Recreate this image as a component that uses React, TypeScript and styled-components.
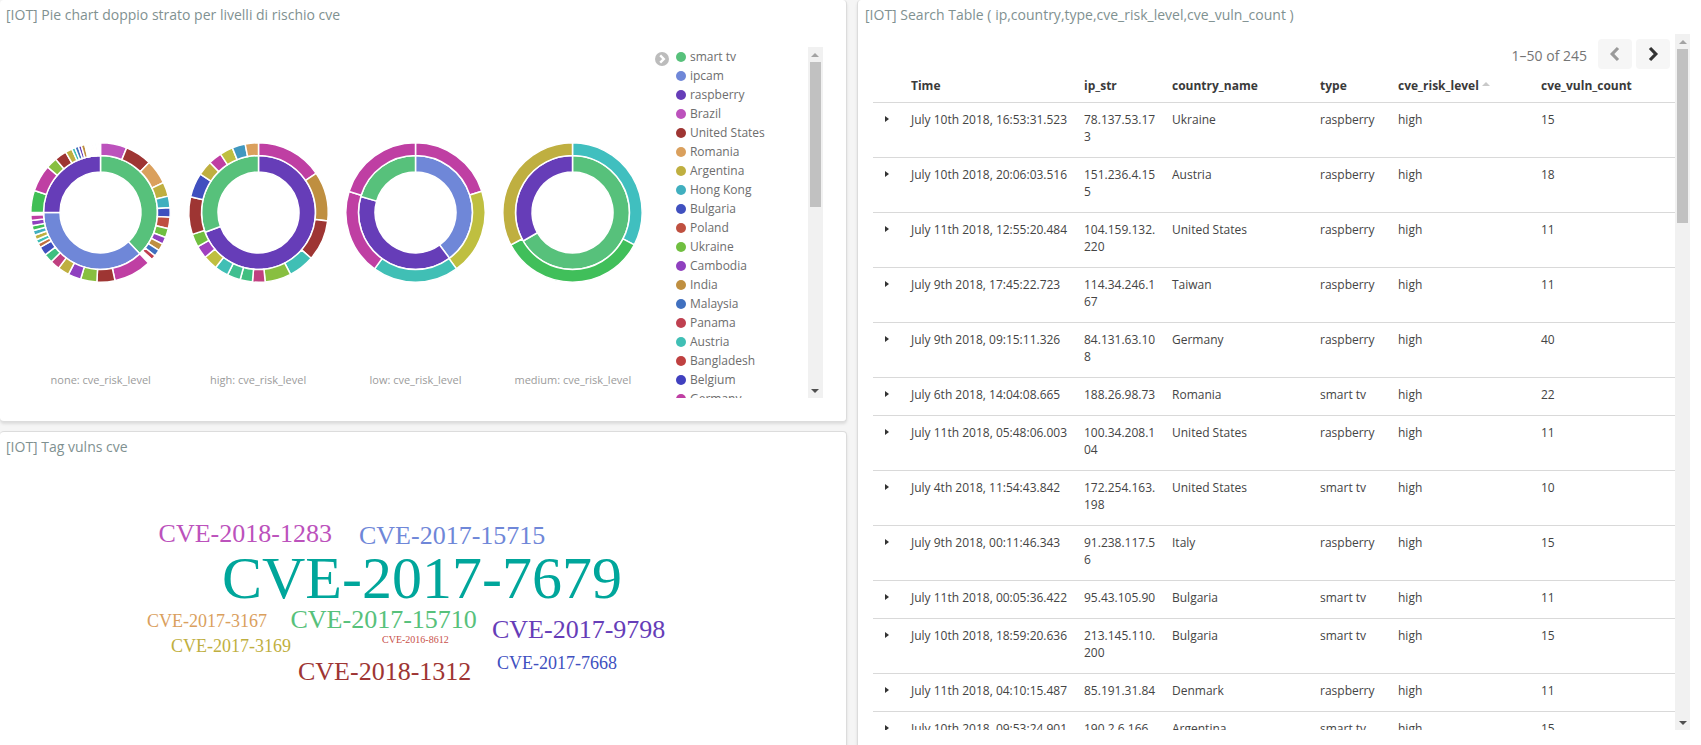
import styled, { createGlobalStyle } from "styled-components";

const GlobalStyle = createGlobalStyle`
  html, body {
    margin: 0;
    padding: 0;
    height: 745px;
    overflow: hidden;
    background: #f5f5f5;
    font-family: "Open Sans", "Noto Sans", sans-serif;
  }
`;

const Page = styled.div`
  display: grid;
  grid-template-columns: 847px 860px;
  grid-template-rows: 760px;
  column-gap: 10px;
  width: 1701px;
  height: 745px;
  overflow: hidden;
`;
const LeftColumn = styled.div`
  display: flex;
  flex-direction: column;
  gap: 9px;
`;
const Panel = styled.section<{ $height?: number; $flushTop?: boolean; $flushLeft?: boolean }>`
  box-sizing: border-box;
  flex: ${({ $height }) => ($height ? `0 0 ${$height}px` : "1")};
  min-height: 0;
  background: #fff;
  border: 1px solid #dcdcdc;
  border-top-width: ${({ $flushTop }) => ($flushTop ? 0 : "1px")};
  border-left-width: ${({ $flushLeft }) => ($flushLeft ? 0 : "1px")};
  border-radius: 4px;
  box-shadow: 0 2px 3px rgba(0, 0, 0, 0.1);
  overflow: hidden;
`;
const Title = styled.h2`
  margin: 0;
  height: 30px;
  padding-left: 6px;
  font-size: 14px;
  font-weight: 400;
  line-height: 30px;
  color: #7f9191;
  white-space: nowrap;
`;
const TableTitle = styled(Title)`
  padding-left: 7px;
  height: 34px;
`;

const PieBody = styled.div`
  display: flex;
  padding-left: 22px;
`;
const Charts = styled.div`
  display: flex;
  padding-top: 104px;
`;
const ChartColumn = styled.div`
  width: 157.4px;
  display: flex;
  flex-direction: column;
  align-items: center;
`;
const Donut = styled.svg`
  display: block;
  flex: none;
  width: 157px;
  height: 157px;
`;
const ChartLabel = styled.div`
  margin-top: 81px;
  font-size: 11px;
  line-height: 16px;
  color: #9b9b9b;
  white-space: nowrap;
`;
const LegendToggle = styled.svg`
  flex: none;
  width: 14px;
  height: 14px;
  margin: 22px 1px 0 3.4px;
`;
const LegendBox = styled.div`
  display: flex;
  margin-top: 17px;
  height: 351px;
`;
const LegendList = styled.ul`
  width: 138px;
  height: 351px;
  margin: 0;
  padding: 0 0 0 6px;
  box-sizing: border-box;
  list-style: none;
  overflow: hidden;
`;
const LegendItem = styled.li`
  display: flex;
  align-items: center;
  height: 19px;
  font-size: 12px;
  color: #6d6d6d;
  white-space: nowrap;
`;
const LegendDot = styled.span<{ $color: string }>`
  flex: none;
  width: 10px;
  height: 10px;
  margin-right: 4px;
  border-radius: 50%;
  background: ${({ $color }) => $color};
`;
const Track = styled.div`
  flex: none;
  width: 15px;
  display: flex;
  flex-direction: column;
  align-items: center;
  background: #f1f1f1;
`;
const ArrowBox = styled.div`
  flex: none;
  height: 15px;
  display: flex;
  align-items: center;
  justify-content: center;
`;
const ArrowUp = styled.span`
  width: 0;
  height: 0;
  border-left: 4px solid transparent;
  border-right: 4px solid transparent;
  border-bottom: 4px solid #a3a3a3;
`;
const ArrowDown = styled.span`
  width: 0;
  height: 0;
  border-left: 4px solid transparent;
  border-right: 4px solid transparent;
  border-top: 4px solid #505050;
`;
const Thumb = styled.div<{ $height: number }>`
  width: 11px;
  height: ${({ $height }) => $height}px;
  background: #c1c1c1;
`;
const TrackGap = styled.div`
  flex: 1;
`;

const Cloud = styled.svg`
  display: block;
  width: 846px;
  height: 283px;
  font-family: "Liberation Serif", "Times New Roman", serif;
`;

const TableScroll = styled.div`
  display: flex;
  height: 696px;
  padding-left: 15px;
`;
const TableArea = styled.div`
  width: 802px;
  flex: none;
  overflow: hidden;
`;
const Pager = styled.div`
  display: flex;
  align-items: center;
  justify-content: flex-end;
  height: 35px;
  padding: 0 5px 0 0;
  box-sizing: border-box;
  font-size: 14px;
  color: #757575;
`;
const PagerLabel = styled.span`
  margin-right: 7px;
  padding-top: 8px;
`;
const PagerButton = styled.button`
  width: 34px;
  height: 30px;
  margin: 5px 0 0 4px;
  padding: 0;
  display: flex;
  align-items: center;
  justify-content: center;
  background: #f6f6f6;
  border: 0;
  border-radius: 4px;
`;
const Table = styled.table`
  width: 802px;
  table-layout: fixed;
  border-collapse: collapse;
  font-size: 12px;
  line-height: 17px;
  color: #444;
`;
const Col = styled.col<{ $width: number }>`
  width: ${({ $width }) => $width}px;
`;
const Th = styled.th`
  height: 33px;
  padding: 0 8px;
  box-sizing: border-box;
  border-bottom: 1px solid #d9d9d9;
  text-align: left;
  font-weight: 700;
  color: #3a3a3a;
  white-space: nowrap;
`;
const SortMark = styled.span`
  display: inline-block;
  margin: 0 0 5px 3px;
  vertical-align: middle;
  border-left: 4px solid transparent;
  border-right: 4px solid transparent;
  border-bottom: 4px solid #c9c9c9;
`;
const Td = styled.td`
  padding: 8px 6px 12px 8px;
  border-bottom: 1px solid #d9d9d9;
  vertical-align: top;
  word-break: break-all;
`;
const ToggleCell = styled.td`
  padding: 13px 0 0 12px;
  border-bottom: 1px solid #d9d9d9;
  vertical-align: top;
`;
const Caret = styled.span`
  display: block;
  width: 0;
  height: 0;
  border-top: 3.5px solid transparent;
  border-bottom: 3.5px solid transparent;
  border-left: 4px solid #333;
`;

type Stop = [number, string];

const green = "#57c17b";
const blue = "#6f87d8";
const purple = "#663db8";
const magenta = "#bc52bc";
const darkRed = "#9e3533";
const orange = "#daa05d";
const olive = "#bfaf40";
const teal = "#40afbf";
const indigo = "#4050bf";
const brick = "#bf5040";
const leaf = "#70bf40";
const violet = "#8f40bf";
const tan = "#bf8f40";
const steel = "#4070bf";
const crimson = "#bf4050";
const aqua = "#40bfb5";
const rose = "#bf3fa3";
const lime = "#88bf40";
const pink = "#bf4080";
const jade = "#40bf80";
const grass = "#40bf55";

// lots of tiny slices in the first chart
const stripes = (from: number, to: number, colors: string[]): Stop[] => {
  const step = (to - from) / colors.length;
  return colors.map((c, i) => [from + step * (i + 1), c]);
};
const tiny = [teal, crimson, lime, violet, orange, steel, rose];
const repeatTiny = (n: number) => Array.from({ length: n }, (_, i) => tiny[i % tiny.length]);

const charts: { label: string; inner: Stop[]; outer: Stop[] }[] = [
  {
    label: "none: cve_risk_level",
    inner: [[136.4, green], [270, blue], [360, purple]],
    outer: [
      [22, magenta], [44.2, darkRed], [64.6, orange], [76.4, olive], [86, teal], [94, indigo],
      [103.4, brick], [111, leaf], [117, violet], [123, tan], [128.5, steel], [132.5, crimson],
      ...stripes(132.5, 136.5, repeatTiny(6)),
      [168, rose], [183, darkRed], [196.6, lime], [207.4, violet], [217, olive], [225, pink],
      [232.5, jade], [240, indigo], [243.5, "#bf7040"], [247, aqua], [251, olive], [255, teal],
      [259, grass], [263.5, violet], [268, rose], [270, "#ffffff"],
      [288.4, grass], [310.7, rose], [320, lime], [330, darkRed], [335.7, olive],
      [338.5, aqua], [341.5, steel], [344, purple], [347, tan],
      ...stripes(347, 360, repeatTiny(20)),
    ],
  },
  {
    label: "high: cve_risk_level",
    inner: [[249.8, purple], [360, green]],
    outer: [
      [55.8, rose], [97, tan], [131, darkRed], [152.6, aqua], [174.5, lime], [185, pink],
      [195.3, jade], [206.4, "#40bf90"], [217.9, aqua], [230, "#bfbf40"], [240.7, "#a040bf"],
      [251.7, leaf], [283, darkRed], [303.4, indigo], [315.8, olive], [327, rose],
      [338, "#bfbf40"], [349, "#4098bf"], [360, orange],
    ],
  },
  {
    label: "low: cve_risk_level",
    inner: [[143.4, blue], [286.3, purple], [360, green]],
    outer: [[72.2, rose], [144, "#bfbf40"], [216, aqua], [287.6, rose], [360, rose]],
  },
  {
    label: "medium: cve_risk_level",
    inner: [[240, green], [360, purple]],
    outer: [[117.6, "#40bfbf"], [242.3, "#40bf5a"], [360, olive]],
  },
];

const polar = (r: number, deg: number) => {
  const a = ((deg - 90) * Math.PI) / 180;
  return `${(78.5 + r * Math.cos(a)).toFixed(2)} ${(78.5 + r * Math.sin(a)).toFixed(2)}`;
};
const arc = (r0: number, r1: number, from: number, to: number) => {
  const large = to - from > 180 ? 1 : 0;
  return `M${polar(r1, from)}A${r1} ${r1} 0 ${large} 1 ${polar(r1, to)}L${polar(r0, to)}A${r0} ${r0} 0 ${large} 0 ${polar(r0, from)}Z`;
};
const Ring = ({ stops, r0, r1 }: { stops: Stop[]; r0: number; r1: number }) => (
  <>
    {stops.map(([end, color], i) => (
      <path
        key={i}
        d={arc(r0, r1, i === 0 ? 0 : stops[i - 1][0], end)}
        fill={color}
        stroke="#fff"
        strokeWidth={1.5}
      />
    ))}
  </>
);

const legend: [string, string][] = [
  ["smart tv", green], ["ipcam", blue], ["raspberry", purple], ["Brazil", magenta],
  ["United States", darkRed], ["Romania", orange], ["Argentina", olive], ["Hong Kong", teal],
  ["Bulgaria", indigo], ["Poland", brick], ["Ukraine", leaf], ["Cambodia", violet],
  ["India", tan], ["Malaysia", steel], ["Panama", crimson], ["Austria", aqua],
  ["Bangladesh", "#bf4040"], ["Belgium", "#4040bf"], ["Germany", rose],
];

const words: { text: string; x: number; y: number; size: number; fill: string }[] = [
  { text: "CVE-2018-1283", x: 158.6, y: 542, size: 26, fill: magenta },
  { text: "CVE-2017-15715", x: 359, y: 544, size: 26, fill: blue },
  { text: "CVE-2017-7679", x: 222, y: 598, size: 60, fill: "#00a69b" },
  { text: "CVE-2017-3167", x: 147, y: 627, size: 18, fill: orange },
  { text: "CVE-2017-15710", x: 290.5, y: 628, size: 26, fill: green },
  { text: "CVE-2017-9798", x: 492, y: 638, size: 26, fill: purple },
  { text: "CVE-2016-8612", x: 382, y: 643, size: 10, fill: "#c8504a" },
  { text: "CVE-2017-3169", x: 171, y: 652, size: 18, fill: olive },
  { text: "CVE-2017-7668", x: 497, y: 669, size: 18, fill: indigo },
  { text: "CVE-2018-1312", x: 298, y: 680, size: 26, fill: darkRed },
];

const rows = [
  ["July 10th 2018, 16:53:31.523", "78.137.53.173", "Ukraine", "raspberry", "high", "15"],
  ["July 10th 2018, 20:06:03.516", "151.236.4.155", "Austria", "raspberry", "high", "18"],
  ["July 11th 2018, 12:55:20.484", "104.159.132.220", "United States", "raspberry", "high", "11"],
  ["July 9th 2018, 17:45:22.723", "114.34.246.167", "Taiwan", "raspberry", "high", "11"],
  ["July 9th 2018, 09:15:11.326", "84.131.63.108", "Germany", "raspberry", "high", "40"],
  ["July 6th 2018, 14:04:08.665", "188.26.98.73", "Romania", "smart tv", "high", "22"],
  ["July 11th 2018, 05:48:06.003", "100.34.208.104", "United States", "raspberry", "high", "11"],
  ["July 4th 2018, 11:54:43.842", "172.254.163.198", "United States", "smart tv", "high", "10"],
  ["July 9th 2018, 00:11:46.343", "91.238.117.56", "Italy", "raspberry", "high", "15"],
  ["July 11th 2018, 00:05:36.422", "95.43.105.90", "Bulgaria", "smart tv", "high", "11"],
  ["July 10th 2018, 18:59:20.636", "213.145.110.200", "Bulgaria", "smart tv", "high", "15"],
  ["July 11th 2018, 04:10:15.487", "85.191.31.84", "Denmark", "raspberry", "high", "11"],
  ["July 10th 2018, 09:53:24.901", "190.2.6.166", "Argentina", "smart tv", "high", "15"],
];

const colWidths = [30, 173, 88, 148, 78, 143, 142];

const Chevron = ({ left, color }: { left?: boolean; color: string }) => (
  <svg width="12" height="16" viewBox="0 0 12 16">
    <path
      d={left ? "M9 2L3.2 8 9 14" : "M3 2l5.8 6L3 14"}
      fill="none"
      stroke={color}
      strokeWidth="3.2"
    />
  </svg>
);

const App = () => {
  return (
    <Page>
      <GlobalStyle />
      <LeftColumn>
        <Panel $height={422} $flushTop $flushLeft>
          <Title>[IOT] Pie chart doppio strato per livelli di rischio cve</Title>
          <PieBody>
            <Charts>
              {charts.map((c) => (
                <ChartColumn key={c.label}>
                  <Donut viewBox="0 0 157 157">
                    <Ring stops={c.inner} r0={40.5} r1={57} />
                    <Ring stops={c.outer} r0={57} r1={69.7} />
                  </Donut>
                  <ChartLabel>{c.label}</ChartLabel>
                </ChartColumn>
              ))}
            </Charts>
            <LegendToggle viewBox="0 0 14 14">
              <circle cx="7" cy="7" r="7" fill="#bcbcbc" />
              <path d="M5.2 3.4L8.8 7l-3.6 3.6" fill="none" stroke="#fff" strokeWidth="2.4" />
            </LegendToggle>
            <LegendBox>
              <LegendList>
                {legend.map(([name, color]) => (
                  <LegendItem key={name}>
                    <LegendDot $color={color} />
                    {name}
                  </LegendItem>
                ))}
              </LegendList>
              <Track>
                <ArrowBox>
                  <ArrowUp />
                </ArrowBox>
                <Thumb $height={145} />
                <TrackGap />
                <ArrowBox>
                  <ArrowDown />
                </ArrowBox>
              </Track>
            </LegendBox>
          </PieBody>
        </Panel>
        <Panel $flushLeft>
          <Title>[IOT] Tag vulns cve</Title>
          <Cloud viewBox="0 462 846 283">
            {words.map((w) => (
              <text key={w.text} x={w.x} y={w.y} fontSize={w.size} fill={w.fill}>
                {w.text}
              </text>
            ))}
          </Cloud>
        </Panel>
      </LeftColumn>
      <Panel $flushTop>
        <TableTitle>[IOT] Search Table ( ip,country,type,cve_risk_level,cve_vuln_count )</TableTitle>
        <TableScroll>
          <TableArea>
            <Pager>
              <PagerLabel>1–50 of 245</PagerLabel>
              <PagerButton>
                <Chevron left color="#9a9a9a" />
              </PagerButton>
              <PagerButton>
                <Chevron color="#333" />
              </PagerButton>
            </Pager>
            <Table>
              <colgroup>
                {colWidths.map((w, i) => (
                  <Col key={i} $width={w} />
                ))}
              </colgroup>
              <thead>
                <tr>
                  <Th />
                  <Th>Time</Th>
                  <Th>ip_str</Th>
                  <Th>country_name</Th>
                  <Th>type</Th>
                  <Th>
                    cve_risk_level
                    <SortMark />
                  </Th>
                  <Th>cve_vuln_count</Th>
                </tr>
              </thead>
              <tbody>
                {rows.map((r) => (
                  <tr key={r[0]}>
                    <ToggleCell>
                      <Caret />
                    </ToggleCell>
                    {r.map((v, i) => (
                      <Td key={i}>{v}</Td>
                    ))}
                  </tr>
                ))}
              </tbody>
            </Table>
          </TableArea>
          <Track>
            <ArrowBox>
              <ArrowUp />
            </ArrowBox>
            <Thumb $height={174} />
            <TrackGap />
            <ArrowBox>
              <ArrowDown />
            </ArrowBox>
          </Track>
        </TableScroll>
      </Panel>
    </Page>
  );
};

export default App;
